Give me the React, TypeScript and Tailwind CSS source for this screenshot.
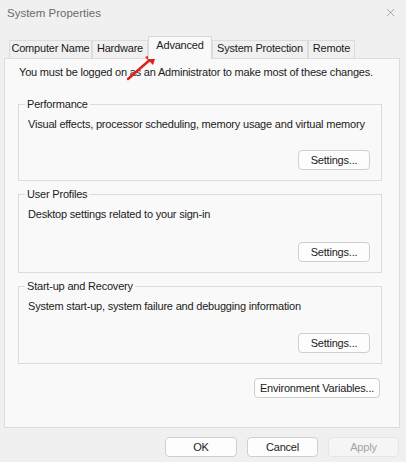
import { X } from 'lucide-react';

function Btn({ label, w = 'w-[71px]', disabled = false }: { label: string; w?: string; disabled?: boolean }) {
  return (
    <button
      className={
        disabled
          ? `${w} h-[20px] rounded-[4px] border border-[#e6e6e6] bg-[#f5f5f5] text-[#a3a3a3] leading-[18px]`
          : `${w} h-[20px] rounded-[4px] border border-[#cfcfcf] bg-[#fdfdfd] text-[#1b1b1b] leading-[18px]`
      }
    >
      {label}
    </button>
  );
}

function Group({ title, text, className = '' }: { title: string; text: string; className?: string }) {
  return (
    <fieldset className={`ml-[13px] w-[364px] flex flex-col border border-[#dcdcdc] pl-[9px] pr-[11px] pb-[10px] ${className}`}>
      <legend className="-ml-[3px] px-[2px] leading-[16px]">{title}</legend>
      <p className="mt-[4px] leading-[16px]">{text}</p>
      <div className="mt-auto flex justify-end">
        <Btn label="Settings..." w="w-[72px]" />
      </div>
    </fieldset>
  );
}

const tabs = [
  { name: 'Computer Name', w: 'w-[83px]' },
  { name: 'Hardware', w: 'w-[56px]' },
  { name: 'Advanced', w: 'w-[64px]' },
  { name: 'System Protection', w: 'w-[96px]' },
  { name: 'Remote', w: 'w-[47px]' },
];

export default function App() {
  return (
    <div
      className="relative w-[406px] h-[462px] bg-[#f0f0f0] text-[11px] tracking-[-0.2px] text-[#1b1b1b] overflow-hidden"
      style={{ fontFamily: '"Liberation Sans", Arial, sans-serif' }}
    >
      {/* Title bar */}
      <div className="flex h-[28px] items-center justify-between pl-[7px] pr-[9px]">
        <span className="text-[11.5px] tracking-normal text-[#6b6b6b]">System Properties</span>
        <X className="-mt-[4px] w-[13px] h-[13px] text-[#8a8a8a]" strokeWidth={1.3} />
      </div>

      {/* Tabs */}
      <div className="mt-[8px] flex h-[22px] items-end pl-[9px]">
        {tabs.map((t) =>
          t.name === 'Advanced' ? (
            <div
              key={t.name}
              className={`${t.w} relative z-10 -mb-px h-[23px] border border-b-0 border-[#d9d9d9] bg-[#f9f9f9] text-center leading-[17px]`}
            >
              {t.name}
            </div>
          ) : (
            <div
              key={t.name}
              className={`${t.w} h-[18px] border border-b-0 border-[#dcdcdc] bg-[#f0f0f0] text-center leading-[15px]`}
            >
              {t.name}
            </div>
          )
        )}
      </div>

      {/* Panel */}
      <div className="ml-[4px] w-[396px] h-[370px] border border-[#dcdcdc] bg-[#f9f9f9] pt-[5px]">
        <p className="pl-[14px] leading-[16px]">You must be logged on as an Administrator to make most of these changes.</p>
        <Group className="mt-[16px] h-[85px]" title="Performance" text="Visual effects, processor scheduling, memory usage and virtual memory" />
        <Group className="mt-[5px] h-[87px]" title="User Profiles" text="Desktop settings related to your sign-in" />
        <Group className="mt-[5px] h-[86px]" title="Start-up and Recovery" text="System start-up, system failure and debugging information" />
        <div className="mt-[14px] flex justify-end pr-[19px]">
          <Btn label="Environment Variables..." w="w-[126px]" />
        </div>
      </div>

      {/* Footer buttons */}
      <div className="mt-[9px] flex justify-end gap-[10px] pr-[7px]">
        <Btn label="OK" w="w-[72px]" />
        <Btn label="Cancel" />
        <Btn label="Apply" disabled />
      </div>

      {/* Red annotation arrow */}
      <svg className="absolute left-[120px] top-[45px]" width="50" height="45" viewBox="0 0 50 45">
        <line x1="8" y1="34" x2="32" y2="13" stroke="#e02020" strokeWidth="2.5" strokeLinecap="round" />
        <polygon points="37,8 25,12 33,20" fill="#e02020" />
      </svg>
    </div>
  );
}
